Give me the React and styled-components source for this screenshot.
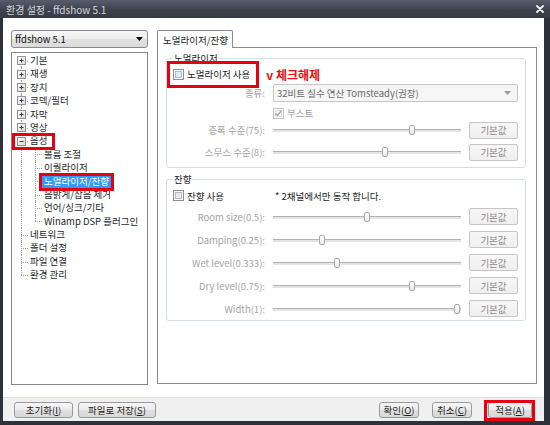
import React from 'react'
import styled, { createGlobalStyle } from 'styled-components'

const GlobalStyle = createGlobalStyle`
  html, body { margin: 0; padding: 0; background: #2d313a; }
  body {
    font-family: "Noto Sans CJK KR", "Noto Sans", sans-serif;
    font-size: 9.5px;
    color: #1a1a1a;
  }
  * { box-sizing: border-box; }
`

const Window = styled.div`
  width: 550px;
  height: 425px;
  display: flex;
  flex-direction: column;
  background: #2d313a;
  overflow: hidden;
`

const TitleBar = styled.div`
  height: 18px;
  flex: none;
  display: flex;
  align-items: center;
  justify-content: space-between;
  padding: 0 6px;
  background: linear-gradient(#565c6a, #3d424e 55%, #363a45);
  color: #d2d6dc;
  font-size: 10px;
`

const Client = styled.div`
  flex: 1;
  margin: 0 6px 4px 3px;
  background: #fff;
  display: flex;
  flex-direction: column;
`

const Main = styled.div`
  flex: 1;
  display: flex;
  gap: 9px;
  padding: 12px 0 0 8px;
`

const Sidebar = styled.div`
  width: 137px;
  display: flex;
  flex-direction: column;
  gap: 4px;
`

const ProfileCombo = styled.div`
  height: 18px;
  border: 1px solid #8a8a8a;
  border-radius: 3px;
  background: linear-gradient(#f7f7f7, #ededed 50%, #e2e2e2 51%, #dadada);
  display: flex;
  align-items: center;
  justify-content: space-between;
  padding: 0 4px 0 3px;
  color: #111;
`

const Tree = styled.ul`
  height: 333px;
  margin: 0;
  padding: 1px 0 0 2px;
  list-style: none;
  border: 1px solid #828790;
  background: #fff;
`

const TreeRow = styled.li`
  height: 13.4px;
  display: flex;
  align-items: stretch;
`

const Guide = styled.span`
  position: relative;
  width: 14px;
  flex: none;
  display: flex;
  align-items: center;
  justify-content: center;

  &::before {
    content: '';
    position: absolute;
    left: 7px;
    top: ${p => (p.$up ? '0' : '50%')};
    bottom: ${p => (p.$down ? '0' : '50%')};
    border-left: 1px dotted #a0a0a0;
    display: ${p => (p.$up || p.$down ? 'block' : 'none')};
  }

  &::after {
    content: '';
    position: absolute;
    left: 7px;
    right: 0;
    top: 50%;
    border-top: 1px dotted #a0a0a0;
    display: ${p => (p.$stub ? 'block' : 'none')};
  }

  svg { position: relative; z-index: 1; }
`

const NodeLabel = styled.span`
  padding: 0 2px;
  line-height: 13.4px;
  white-space: nowrap;
  color: ${p => (p.$selected ? '#fff' : '#1e1e1e')};
  background: ${p => (p.$selected ? '#3399ff' : 'transparent')};
`

const Mark = styled.span`
  position: relative;
  display: inline-flex;
  align-items: center;
  align-self: stretch;

  &::after {
    content: '';
    position: absolute;
    inset: ${p => p.$inset};
    border: 3px solid #e60012;
    pointer-events: none;
    z-index: 2;
  }
`

const TabArea = styled.div`
  width: 380px;
  display: flex;
  flex-direction: column;
`

const TabStrip = styled.div`
  height: 17px;
  display: flex;
`

const Tab = styled.div`
  width: 76px;
  height: 18px;
  margin-bottom: -1px;
  border: 1px solid #898c95;
  border-bottom: none;
  border-radius: 2px 2px 0 0;
  background: #fff;
  position: relative;
  z-index: 1;
  display: flex;
  align-items: center;
  padding-left: 5px;
  color: #222;
`

const TabPage = styled.div`
  height: 337px;
  border: 1px solid #898c95;
  background: #fff;
  padding: 4px 0 0 8px;
`

const Group = styled.fieldset`
  margin: ${p => p.$mt}px 0 0 0;
  width: 360px;
  min-width: 0;
  padding: 0 7px ${p => p.$pb}px 6px;
  border: 1px solid #d5dfe5;
  border-radius: 3px;

  legend {
    padding: 0 1px;
    line-height: 13px;
    color: #1a1a1a;
  }
`

const CheckLine = styled.div`
  height: ${p => p.$h}px;
  display: flex;
  align-items: center;
`

const CheckItem = styled.span`
  display: inline-flex;
  align-items: center;
  gap: 3px;
  color: ${p => (p.$disabled ? '#9a9a9a' : '#1a1a1a')};
  white-space: nowrap;
`

const Annotation = styled.span`
  margin-left: 16px;
  color: #f00c0c;
  font-size: 12px;
  font-weight: 700;
  white-space: nowrap;
`

const FieldRow = styled.div`
  display: grid;
  grid-template-columns: 92px 188px 49px;
  column-gap: 8px;
  align-items: center;
  height: ${p => p.$h}px;
  margin-top: ${p => p.$mt || 0}px;
`

const FieldLabel = styled.span`
  text-align: right;
  color: #a3a3a3;
  white-space: nowrap;
`

const Note = styled.span`
  padding-left: 2px;
  white-space: nowrap;
  color: #1a1a1a;
`

const SelectBox = styled.div`
  grid-column: 2 / 4;
  height: 18px;
  border: 1px solid #c6c6c6;
  border-radius: 2px;
  background: #f6f6f6;
  display: flex;
  align-items: center;
  justify-content: space-between;
  padding: 0 6px 0 3px;
  color: #6a6a6a;
`

const Track = styled.div`
  position: relative;
  height: 10px;

  &::before {
    content: '';
    position: absolute;
    left: 0;
    right: 0;
    top: 4px;
    height: 2px;
    border-top: 1px solid #b2b2b2;
    background: #e4e4e4;
  }
`

const Thumb = styled.span`
  position: absolute;
  top: 0;
  width: 6px;
  height: 10px;
  margin-left: -3px;
  border: 1px solid #a8a8a8;
  border-radius: 2px;
  background: linear-gradient(#ffffff, #e9e9e9);
`

const SmallButton = styled.button`
  height: 17px;
  padding: 0;
  font: inherit;
  color: #8a8a8a;
  background: linear-gradient(#f7f7f7, #efefef);
  border: 1px solid #c5c5c5;
  border-radius: 2px;
`

const ButtonBar = styled.div`
  height: 24px;
  flex: none;
  border-top: 1px solid #dfdfdf;
  background: #f0f0f0;
  display: flex;
  align-items: center;
  justify-content: space-between;
  padding: 0 12px 0 11px;
`

const ButtonGroup = styled.div`
  display: flex;
  align-items: center;
  gap: ${p => p.$gap}px;
`

const DialogButton = styled.button`
  width: ${p => p.$w}px;
  height: 16px;
  padding: 0;
  font: inherit;
  color: #222;
  background: linear-gradient(#f6f6f6, #ebebeb 50%, #e0e0e0 51%, #d8d8d8);
  border: 1px solid #9a9a9a;
  border-radius: 3px;
  u { text-decoration: underline; }
`

const DownArrow = ({ color = '#000' }) => (
  <svg width="7" height="4" viewBox="0 0 7 4"><path d="M0 0h7L3.5 4z" fill={color} /></svg>
)

const CloseIcon = () => (
  <svg width="8" height="8" viewBox="0 0 8 8">
    <path d="M1 1l6 6M7 1L1 7" stroke="#f2f2f2" strokeWidth="1.8" strokeLinecap="round" />
  </svg>
)

const Expander = ({ open }) => (
  <svg width="9" height="9" viewBox="0 0 9 9">
    <defs>
      <linearGradient id="exp" x1="0" y1="0" x2="1" y2="1">
        <stop offset="0" stopColor="#ffffff" />
        <stop offset="1" stopColor="#d8d8d0" />
      </linearGradient>
    </defs>
    <rect x="0.5" y="0.5" width="8" height="8" fill="url(#exp)" stroke="#919191" />
    <path d="M2.5 4.5h4" stroke="#2a3a5a" />
    {!open && <path d="M4.5 2.5v4" stroke="#2a3a5a" />}
  </svg>
)

const CheckBox = ({ checked, disabled, tone = 'gray' }) => {
  const outer = disabled ? '#c8c8c8' : '#8e8f8f'
  const inner = tone === 'blue' ? '#9fc3e0' : disabled ? '#e2e2e2' : '#b4b8bd'
  const fill = tone === 'blue' ? '#dcecf9' : disabled ? '#f4f4f4' : '#e8e9eb'
  return (
    <svg width="11" height="11" viewBox="0 0 11 11">
      <rect x="0.5" y="0.5" width="10" height="10" fill="#fff" stroke={outer} />
      <rect x="2.5" y="2.5" width="6" height="6" fill={fill} stroke={inner} />
      {checked && (
        <path d="M2.5 5.5l2 2 4-5" fill="none" stroke={disabled ? '#a6a6a6' : '#333'} strokeWidth="1.3" />
      )}
    </svg>
  )
}

const Slider = ({ pos }) => (
  <Track>
    <Thumb style={{ left: 4 + pos * 180 }} />
  </Track>
)

const treeItems = [
  { label: '기본', guides: [{ down: true, stub: true, box: 'closed' }] },
  { label: '재생', guides: [{ up: true, down: true, stub: true, box: 'closed' }] },
  { label: '장치', guides: [{ up: true, down: true, stub: true, box: 'closed' }] },
  { label: '코덱/필터', guides: [{ up: true, down: true, stub: true, box: 'closed' }] },
  { label: '자막', guides: [{ up: true, down: true, stub: true, box: 'closed' }] },
  { label: '영상', guides: [{ up: true, down: true, stub: true, box: 'closed' }] },
  { label: '음성', guides: [{ up: true, down: true, stub: true, box: 'open' }], mark: '-1px -6px -2px -2px' },
  { label: '볼륨 조절', guides: [{ up: true, down: true }, { up: true, down: true, stub: true }] },
  { label: '이퀄라이저', guides: [{ up: true, down: true }, { up: true, down: true, stub: true }] },
  { label: '노멀라이저/잔향', guides: [{ up: true, down: true }, { up: true, down: true, stub: true }], selected: true },
  { label: '음밝게/잡음 제거', guides: [{ up: true, down: true }, { up: true, down: true, stub: true }] },
  { label: '언어/싱크/기타', guides: [{ up: true, down: true }, { up: true, down: true, stub: true }] },
  { label: 'Winamp DSP 플러그인', guides: [{ up: true, down: true }, { up: true, stub: true }] },
  { label: '네트워크', guides: [{ up: true, down: true, stub: true }] },
  { label: '폴더 설정', guides: [{ up: true, down: true, stub: true }] },
  { label: '파일 연결', guides: [{ up: true, down: true, stub: true }] },
  { label: '환경 관리', guides: [{ up: true, stub: true }] },
]

const renderGuides = guides =>
  guides.map((g, i) => (
    <Guide key={i} $up={g.up} $down={g.down} $stub={g.stub}>
      {g.box && <Expander open={g.box === 'open'} />}
    </Guide>
  ))

const normalizerRows = [
  { label: '증폭 수준(75):', pos: 0.75 },
  { label: '스무스 수준(8):', pos: 0.6 },
]

const reverbRows = [
  { label: 'Room size(0.5):', pos: 0.5 },
  { label: 'Damping(0.25):', pos: 0.25 },
  { label: 'Wet level(0.333):', pos: 0.333 },
  { label: 'Dry level(0.75):', pos: 0.75 },
  { label: 'Width(1):', pos: 1 },
]

export default function App() {
  return (
    <>
      <GlobalStyle />
      <Window>
        <TitleBar>
          <span>환경 설정 - ffdshow 5.1</span>
          <CloseIcon />
        </TitleBar>
        <Client>
          <Main>
            <Sidebar>
              <ProfileCombo>
                <span>ffdshow 5.1</span>
                <DownArrow />
              </ProfileCombo>
              <Tree>
                {treeItems.map(item => (
                  <TreeRow key={item.label}>
                    {item.mark ? (
                      <Mark $inset={item.mark}>
                        {renderGuides(item.guides)}
                        <NodeLabel>{item.label}</NodeLabel>
                      </Mark>
                    ) : (
                      <>
                        {renderGuides(item.guides)}
                        {item.selected ? (
                          <Mark $inset="-2px -3px -3px -3px">
                            <NodeLabel $selected>{item.label}</NodeLabel>
                          </Mark>
                        ) : (
                          <NodeLabel>{item.label}</NodeLabel>
                        )}
                      </>
                    )}
                  </TreeRow>
                ))}
              </Tree>
            </Sidebar>

            <TabArea>
              <TabStrip>
                <Tab>노멀라이저/잔향</Tab>
              </TabStrip>
              <TabPage>
                <Group $mt={0} $pb={4}>
                  <legend>노멀라이저</legend>
                  <CheckLine $h={18}>
                    <Mark $inset="-4px -9px -5px -6px">
                      <CheckItem>
                        <CheckBox tone="blue" />
                        노멀라이저 사용
                      </CheckItem>
                    </Mark>
                    <Annotation>v 체크해제</Annotation>
                  </CheckLine>
                  <FieldRow $h={19}>
                    <FieldLabel>종류:</FieldLabel>
                    <SelectBox>
                      <span>32비트 실수 연산 Tomsteady(권장)</span>
                      <DownArrow color="#9a9a9a" />
                    </SelectBox>
                  </FieldRow>
                  <FieldRow $h={13} $mt={4}>
                    <span />
                    <CheckItem $disabled>
                      <CheckBox checked disabled />
                      부스트
                    </CheckItem>
                  </FieldRow>
                  {normalizerRows.map(r => (
                    <FieldRow key={r.label} $h={22}>
                      <FieldLabel>{r.label}</FieldLabel>
                      <Slider pos={r.pos} />
                      <SmallButton>기본값</SmallButton>
                    </FieldRow>
                  ))}
                </Group>

                <Group $mt={5} $pb={0}>
                  <legend>잔향</legend>
                  <FieldRow $h={19}>
                    <CheckItem>
                      <CheckBox />
                      잔향 사용
                    </CheckItem>
                    <Note>* 2채널에서만 동작 합니다.</Note>
                  </FieldRow>
                  {reverbRows.map(r => (
                    <FieldRow key={r.label} $h={23}>
                      <FieldLabel>{r.label}</FieldLabel>
                      <Slider pos={r.pos} />
                      <SmallButton>기본값</SmallButton>
                    </FieldRow>
                  ))}
                </Group>
              </TabPage>
            </TabArea>
          </Main>

          <ButtonBar>
            <ButtonGroup $gap={5}>
              <DialogButton $w={59}>초기화(<u>I</u>)</DialogButton>
              <DialogButton $w={78}>파일로 저장(<u>S</u>)</DialogButton>
            </ButtonGroup>
            <ButtonGroup $gap={13}>
              <DialogButton $w={40}>확인(<u>O</u>)</DialogButton>
              <DialogButton $w={40}>취소(<u>C</u>)</DialogButton>
              <Mark $inset="-2px -3px -3px -4px" style={{ marginLeft: 3 }}>
                <DialogButton $w={44}>적용(<u>A</u>)</DialogButton>
              </Mark>
            </ButtonGroup>
          </ButtonBar>
        </Client>
      </Window>
    </>
  )
}
